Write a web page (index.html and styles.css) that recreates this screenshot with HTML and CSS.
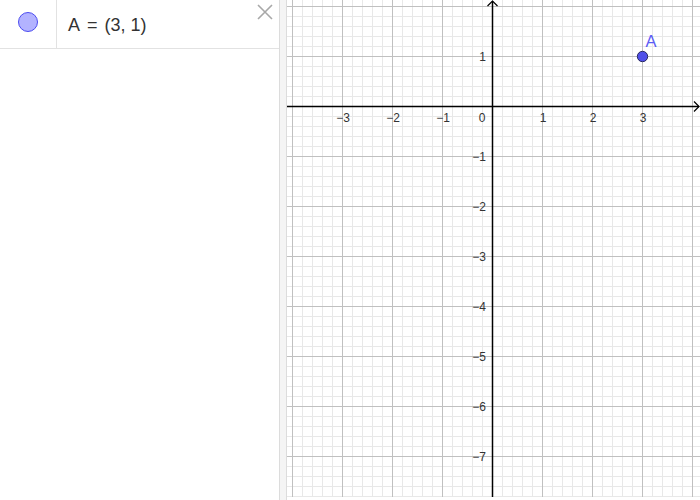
FILE: index.html
```html
<!DOCTYPE html>
<html>
<head>
<meta charset="utf-8">
<link rel="stylesheet" href="styles.css">
</head>
<body>
<div class="app">
  <div class="algebra">
    <div class="row">
      <div class="marble"><span class="dot"></span></div>
      <div class="formula">A<span class="eq">=</span>(3, 1)</div>
      <svg class="close" width="16" height="16" viewBox="0 0 16 16"><path d="M1 1 L15 15 M15 1 L1 15" stroke="#a8a8a8" stroke-width="1.6" fill="none"/></svg>
    </div>
  </div>
  <div class="splitter"></div>
  <div class="graphics">
    <svg width="413" height="497" viewBox="0 0 413 497" font-family="Liberation Sans, Arial, sans-serif">
      <defs>
        <pattern id="minor" x="5" y="6" width="10" height="10" patternUnits="userSpaceOnUse">
          <rect x="0" y="0" width="1" height="10" fill="#e8e8e8"/>
          <rect x="0" y="0" width="10" height="1" fill="#e8e8e8"/>
        </pattern>
        <pattern id="major" x="5" y="6" width="50" height="50" patternUnits="userSpaceOnUse">
          <rect x="0" y="0" width="1" height="50" fill="#c0c0c0"/>
          <rect x="0" y="0" width="50" height="1" fill="#c0c0c0"/>
        </pattern>
      </defs>
      <rect width="413" height="497" fill="#fff"/>
      <rect width="413" height="497" fill="url(#minor)"/>
      <rect width="413" height="497" fill="url(#major)"/>
      <line x1="0" y1="106.5" x2="412" y2="106.5" stroke="#000" stroke-width="1.5"/>
      <line x1="205.5" y1="1" x2="205.5" y2="497" stroke="#000" stroke-width="1.5"/>
      <path d="M407 101.5 L412 106.5 L407 111.5" stroke="#000" stroke-width="1.2" fill="none"/>
      <path d="M200.5 6 L205.5 1 L210.5 6" stroke="#000" stroke-width="1.2" fill="none"/>
      <g font-size="12" fill="#333" text-anchor="middle">
        <text x="56" y="122">−3</text>
        <text x="106" y="122">−2</text>
        <text x="156" y="122">−1</text>
        <text x="195" y="122">0</text>
        <text x="256" y="122">1</text>
        <text x="306" y="122">2</text>
        <text x="356" y="122">3</text>
      </g>
      <g font-size="12" fill="#333" text-anchor="end">
        <text x="199" y="61">1</text>
        <text x="199" y="161">−1</text>
        <text x="199" y="211">−2</text>
        <text x="199" y="261">−3</text>
        <text x="199" y="311">−4</text>
        <text x="199" y="361">−5</text>
        <text x="199" y="411">−6</text>
        <text x="199" y="461">−7</text>
      </g>
      <circle cx="355.5" cy="56.5" r="5.2" fill="#4f4fe8" stroke="#2a2a60" stroke-width="1"/>
      <text x="358.5" y="47" font-size="16.5" fill="#5c5cf5">A</text>
    </svg>
  </div>
</div>
</body>
</html>
```
FILE: styles.css
```css
html, body {
  margin: 0;
  padding: 0;
  background: #fff;
}
body {
  width: 700px;
  height: 500px;
  overflow: hidden;
  font-family: "Liberation Sans", Arial, sans-serif;
}
.app {
  display: flex;
  height: 500px;
}
.algebra {
  width: 279px;
  border-right: 1px solid #dcdcdc;
  background: #fff;
}
.row {
  display: flex;
  position: relative;
  height: 48px;
  border-bottom: 1px solid #e2e2e2;
}
.marble {
  width: 57px;
  border-right: 1px solid #e2e2e2;
  display: flex;
  justify-content: center;
  padding-top: 12px;
  box-sizing: border-box;
}
.dot {
  width: 18px;
  height: 18px;
  border-radius: 50%;
  background: #b3b3ff;
  border: 1px solid #4c4cf0;
}
.formula {
  padding-left: 11px;
  padding-top: 15px;
  font-size: 18px;
  color: #333;
}
.eq {
  margin: 0 7px 0 7px;
}
.close {
  position: absolute;
  right: 6px;
  top: 4px;
}
.splitter {
  width: 6px;
  background: #f4f4f4;
  border-right: 1px solid #dcdcdc;
}
.graphics {
  width: 413px;
  height: 497px;
}
.graphics svg {
  display: block;
}
```
